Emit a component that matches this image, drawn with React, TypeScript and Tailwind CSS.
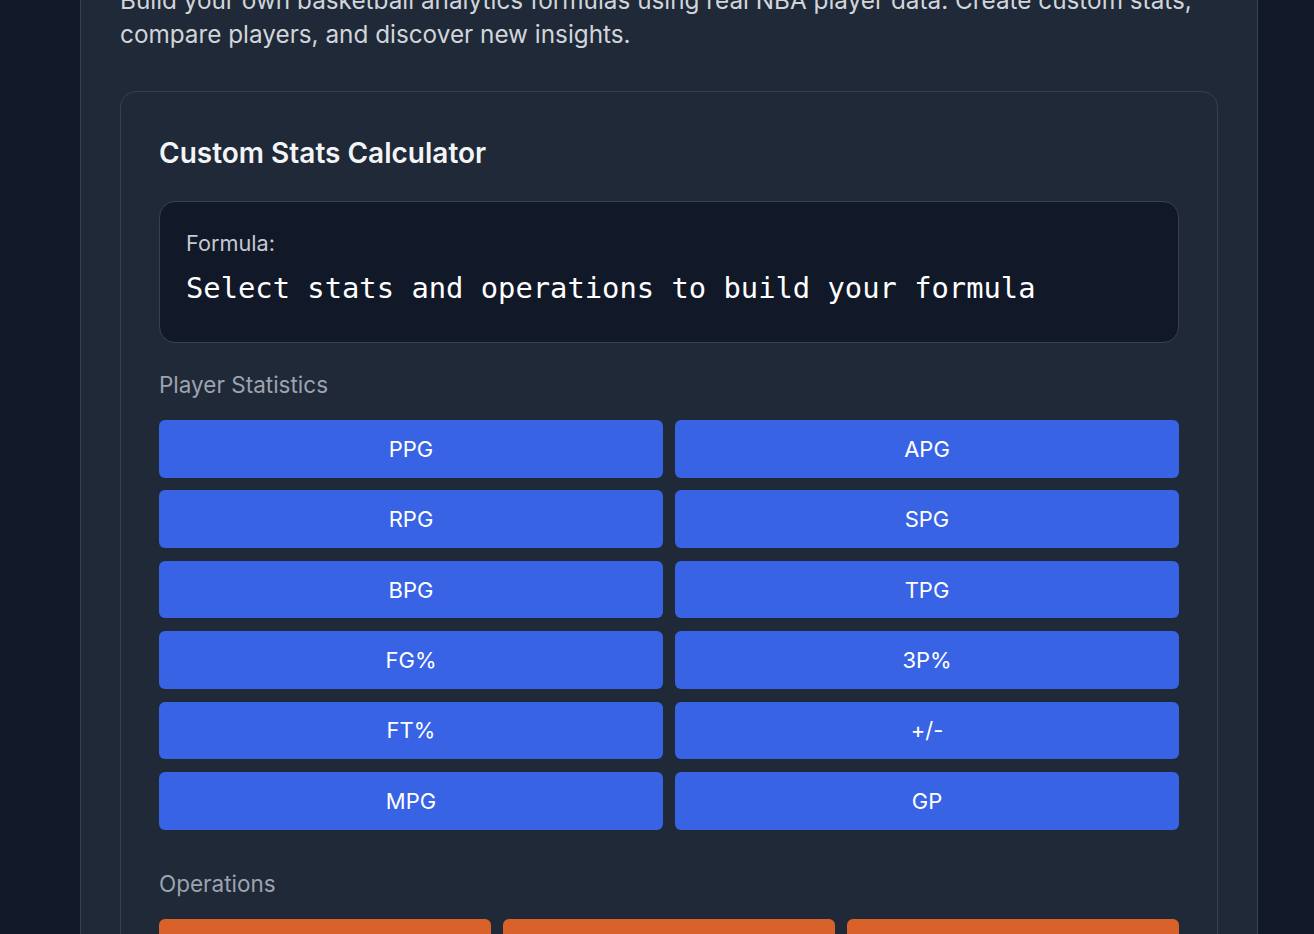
import { FC } from "react";

const stats = ["PPG", "APG", "RPG", "SPG", "BPG", "TPG", "FG%", "3P%", "FT%", "+/-", "MPG", "GP"];
const operations = ["+", "−", "×", "÷", "(", ")"];

const StatButton: FC<{ label: string }> = ({ label }) => (
    <button className="h-[57.6px] rounded-[6px] bg-[#3763e4] pt-px text-[22px] text-white">
        {label}
    </button>
);

const App: FC = () => {
    return (
        <div className="min-h-screen overflow-hidden bg-[#111827] font-['Inter',sans-serif]">
            <div className="-mt-[17px] ml-[80px] w-[1178px] border-x border-[#374151] bg-[#1f2937] px-[39px] pb-10">
                <p className="text-[24.3px] leading-[34px] text-[#d1d5db]">
                    Build your own basketball analytics formulas using real NBA player data. Create custom stats,
                    compare players, and discover new insights.
                </p>

                <section className="mt-[40px] rounded-[16px] border border-[#374151] p-[38px]">
                    <h2 className="mb-[25px] text-[28px] font-semibold leading-[46px] text-[#f3f4f6]">
                        Custom Stats Calculator
                    </h2>

                    <div className="rounded-[16px] border border-[#374151] bg-[#111827] px-[26px] pt-[26px] pb-[30px]">
                        <div className="text-[21.7px] leading-[30px] text-[#c4c9d1]">Formula:</div>
                        <div className="mt-[6px] font-['DejaVu_Sans_Mono',monospace] text-[28.8px] leading-[48px] text-white">
                            Select stats and operations to build your formula
                        </div>
                    </div>

                    <h3 className="mt-[28px] mb-[21px] text-[22.5px] leading-[28px] text-[#9ca3af]">
                        Player Statistics
                    </h3>
                    <div className="grid grid-cols-2 gap-x-3 gap-y-[12.8px]">
                        {stats.map((s) => (
                            <StatButton key={s} label={s} />
                        ))}
                    </div>

                    <h3 className="mt-[40px] mb-[21px] text-[22.5px] leading-[28px] text-[#9ca3af]">
                        Operations
                    </h3>
                    <div className="grid grid-cols-3 gap-3">
                        {operations.map((op) => (
                            <button
                                key={op}
                                className="h-[57.6px] rounded-[6px] bg-[#d9622b] text-[24px] text-white"
                            >
                                {op}
                            </button>
                        ))}
                    </div>
                </section>
            </div>
        </div>
    );
};

export default App;
